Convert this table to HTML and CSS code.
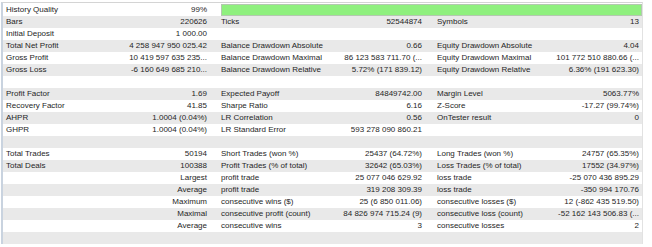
FILE: index.html
```html
<!DOCTYPE html>
<html>
<head>
<meta charset="utf-8">
<link rel="stylesheet" href="styles.css">
</head>
<body>
<div class="report">
  <div class="row">
    <div class="k">History Quality</div><div class="v">99%</div>
    <div class="quality"><div class="bar"></div></div>
  </div>
  <div class="row">
    <div class="k">Bars</div><div class="v">220626</div>
    <div class="k">Ticks</div><div class="v">52544874</div>
    <div class="k">Symbols</div><div class="v">13</div>
  </div>
  <div class="row">
    <div class="k">Initial Deposit</div><div class="v">1 000.00</div>
    <div class="k"></div><div class="v"></div>
    <div class="k"></div><div class="v"></div>
  </div>
  <div class="row">
    <div class="k">Total Net Profit</div><div class="v">4 258 947 950 025.42</div>
    <div class="k">Balance Drawdown Absolute</div><div class="v">0.66</div>
    <div class="k">Equity Drawdown Absolute</div><div class="v">4.04</div>
  </div>
  <div class="row">
    <div class="k">Gross Profit</div><div class="v">10 419 597 635 235...</div>
    <div class="k">Balance Drawdown Maximal</div><div class="v">86 123 583 711.70 (...</div>
    <div class="k">Equity Drawdown Maximal</div><div class="v">101 772 510 880.66 (...</div>
  </div>
  <div class="row">
    <div class="k">Gross Loss</div><div class="v">-6 160 649 685 210...</div>
    <div class="k">Balance Drawdown Relative</div><div class="v">5.72% (171 839.12)</div>
    <div class="k">Equity Drawdown Relative</div><div class="v">6.36% (191 623.30)</div>
  </div>
  <div class="row"></div>
  <div class="row">
    <div class="k">Profit Factor</div><div class="v">1.69</div>
    <div class="k">Expected Payoff</div><div class="v">84849742.00</div>
    <div class="k">Margin Level</div><div class="v">5063.77%</div>
  </div>
  <div class="row">
    <div class="k">Recovery Factor</div><div class="v">41.85</div>
    <div class="k">Sharpe Ratio</div><div class="v">6.16</div>
    <div class="k">Z-Score</div><div class="v">-17.27 (99.74%)</div>
  </div>
  <div class="row">
    <div class="k">AHPR</div><div class="v">1.0004 (0.04%)</div>
    <div class="k">LR Correlation</div><div class="v">0.56</div>
    <div class="k">OnTester result</div><div class="v">0</div>
  </div>
  <div class="row">
    <div class="k">GHPR</div><div class="v">1.0004 (0.04%)</div>
    <div class="k">LR Standard Error</div><div class="v">593 278 090 860.21</div>
    <div class="k"></div><div class="v"></div>
  </div>
  <div class="row"></div>
  <div class="row">
    <div class="k">Total Trades</div><div class="v">50194</div>
    <div class="k">Short Trades (won %)</div><div class="v">25437 (64.72%)</div>
    <div class="k">Long Trades (won %)</div><div class="v">24757 (65.35%)</div>
  </div>
  <div class="row">
    <div class="k">Total Deals</div><div class="v">100388</div>
    <div class="k">Profit Trades (% of total)</div><div class="v">32642 (65.03%)</div>
    <div class="k">Loss Trades (% of total)</div><div class="v">17552 (34.97%)</div>
  </div>
  <div class="row">
    <div class="k"></div><div class="v">Largest</div>
    <div class="k">profit trade</div><div class="v">25 077 046 629.92</div>
    <div class="k">loss trade</div><div class="v">-25 070 436 895.29</div>
  </div>
  <div class="row">
    <div class="k"></div><div class="v">Average</div>
    <div class="k">profit trade</div><div class="v">319 208 309.39</div>
    <div class="k">loss trade</div><div class="v">-350 994 170.76</div>
  </div>
  <div class="row">
    <div class="k"></div><div class="v">Maximum</div>
    <div class="k">consecutive wins ($)</div><div class="v">25 (6 850 011.06)</div>
    <div class="k">consecutive losses ($)</div><div class="v">12 (-862 435 519.50)</div>
  </div>
  <div class="row">
    <div class="k"></div><div class="v">Maximal</div>
    <div class="k">consecutive profit (count)</div><div class="v">84 826 974 715.24 (9)</div>
    <div class="k">consecutive loss (count)</div><div class="v">-52 162 143 506.83 (...</div>
  </div>
  <div class="row">
    <div class="k"></div><div class="v">Average</div>
    <div class="k">consecutive wins</div><div class="v">3</div>
    <div class="k">consecutive losses</div><div class="v">2</div>
  </div>
  <div class="row"></div>
</div>
</body>
</html>
```

FILE: styles.css
```css
html, body {
  margin: 0;
  padding: 0;
  background: #ffffff;
}

body {
  font-family: "Liberation Sans", Arial, sans-serif;
  font-size: 8px;
  color: #262626;
}

.report {
  width: 639px;
  margin: 2px 0 0 1px;
  padding-top: 1px;
  border-top: 1px solid #d4d4d4;
  border-left: 2px solid #c9d3df;
  border-right: 1px solid #e2e2e2;
}

.row {
  display: grid;
  grid-template-columns: 125px 82px 132px 83px 113px 104px;
  height: 12px;
  line-height: 12px;
  background: #ffffff;
}

.row:nth-child(even) {
  background: #e9e9e9;
}

.k,
.v {
  white-space: nowrap;
  overflow: hidden;
}

.k {
  padding-left: 3px;
}

.v {
  text-align: right;
  padding-right: 3px;
}

.row > :nth-child(3) {
  padding-left: 11px;
}

.row > :nth-child(5) {
  padding-left: 12px;
}

.quality {
  grid-column: 3 / 7;
  padding-left: 9px;
}

.bar {
  height: 10px;
  background: #8ff07e;
  border: 1px solid #b4c8b0;
}
```
